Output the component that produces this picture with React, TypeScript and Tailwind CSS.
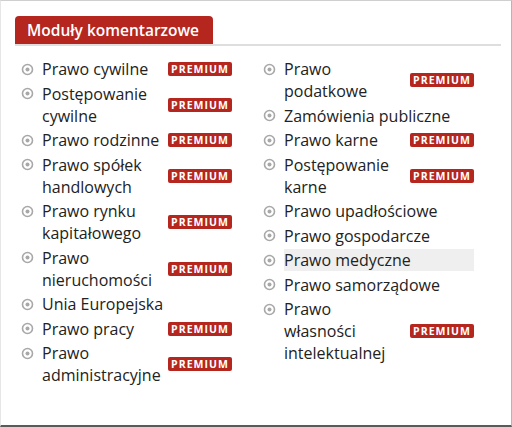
import React from 'react';

type Item = { name: string; premium?: boolean; active?: boolean };

const LEFT: Item[] = [
  { name: 'Prawo cywilne', premium: true },
  { name: 'Postępowanie cywilne', premium: true },
  { name: 'Prawo rodzinne', premium: true },
  { name: 'Prawo spółek handlowych', premium: true },
  { name: 'Prawo rynku kapitałowego', premium: true },
  { name: 'Prawo nieruchomości', premium: true },
  { name: 'Unia Europejska' },
  { name: 'Prawo pracy', premium: true },
  { name: 'Prawo administracyjne', premium: true },
];

const RIGHT: Item[] = [
  { name: 'Prawo podatkowe', premium: true },
  { name: 'Zamówienia publiczne' },
  { name: 'Prawo karne', premium: true },
  { name: 'Postępowanie karne', premium: true },
  { name: 'Prawo upadłościowe' },
  { name: 'Prawo gospodarcze' },
  { name: 'Prawo medyczne', active: true },
  { name: 'Prawo samorządowe' },
  { name: 'Prawo własności intelektualnej', premium: true },
];

const Bullet = () => (
  <svg width="13" height="13" viewBox="0 0 13 13" className="shrink-0 mt-[4.5px]">
    <circle cx="6.5" cy="6.5" r="5" fill="none" stroke="#a8a8a8" strokeWidth="1.6" />
    <circle cx="6.5" cy="6.5" r="2" fill="#a8a8a8" />
  </svg>
);

const Row = ({ item }: { item: Item }) => (
  <li className="flex items-start gap-2">
    <Bullet />
    <div className={`flex-1 flex items-center gap-1 ${item.active ? 'bg-[#efefef]' : ''}`}>
      <span className="flex-1 text-[16px] leading-[22px] text-[#222]">{item.name}</span>
      {item.premium && (
        <span className="shrink-0 w-[64px] text-center bg-[#b5261f] text-white text-[10.5px] leading-[14px] font-bold tracking-[0.1em] rounded-[2px]">
          PREMIUM
        </span>
      )}
    </div>
  </li>
);

const App: React.FC = () => {
  return (
    <div
      className="w-[512px] h-[427px] bg-white border-t border-t-[#cfcfcf] border-r border-r-[#b5b5b5] border-b-2 border-b-[#5a5a5a] border-l border-l-[#e6e6e6] overflow-hidden"
      style={{ fontFamily: '"Open Sans", "Noto Sans", sans-serif' }}
    >
      <div className="ml-[14px] mr-[10px] mt-[15px] border-b-2 border-[#dedede] flex">
        <h2 className="bg-[#b5261f] text-white font-semibold text-[15.5px] leading-[28px] pl-3 whitespace-nowrap rounded-t-[4px] w-[198px]">
          Moduły komentarzowe
        </h2>
      </div>
      <div className="grid grid-cols-2 gap-x-[31px] pl-[20px] pr-[37px] pt-[12px]">
        <ul className="flex flex-col gap-[2.5px]">
          {LEFT.map((it) => <Row key={it.name} item={it} />)}
        </ul>
        <ul className="flex flex-col gap-[2.5px]">
          {RIGHT.map((it) => <Row key={it.name} item={it} />)}
        </ul>
      </div>
    </div>
  );
};

export default App;
